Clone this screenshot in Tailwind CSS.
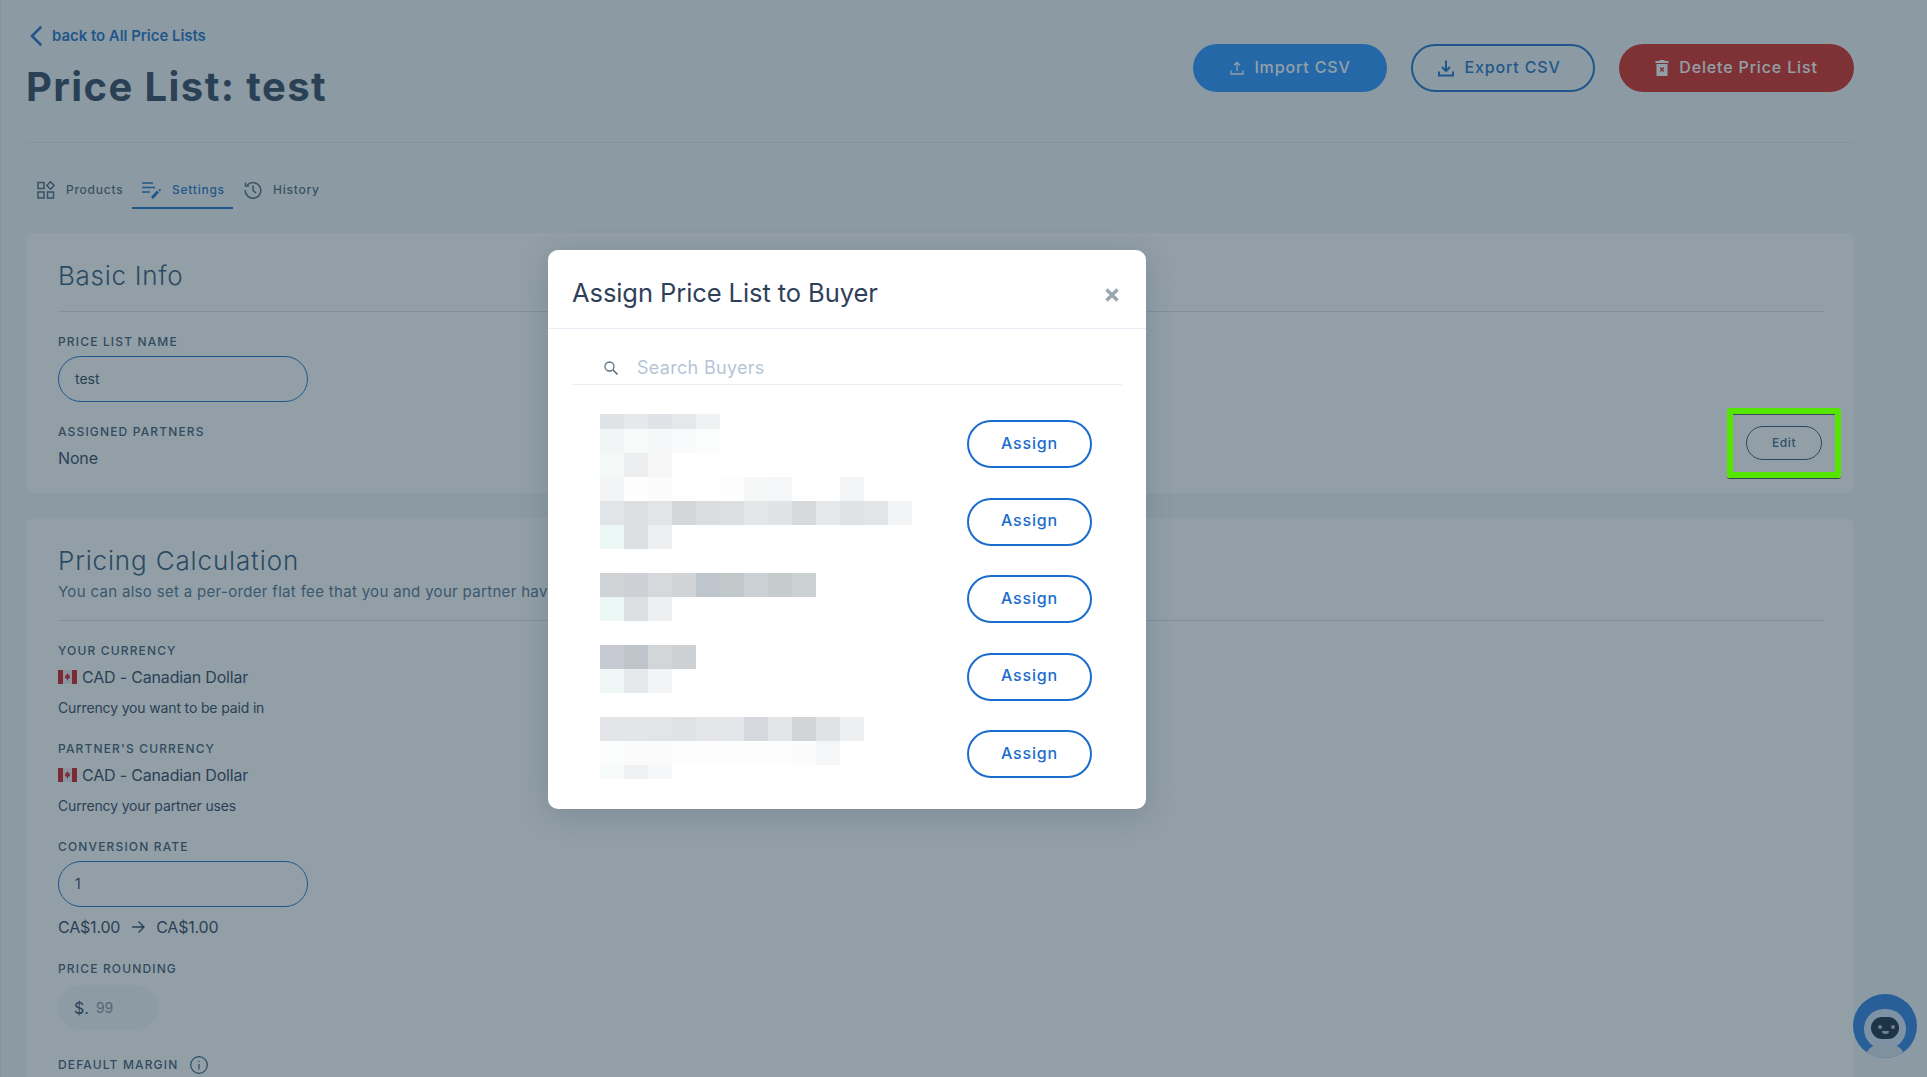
<!DOCTYPE html>
<html>
  <head>
    <meta charset="UTF-8" />
    <title>Price List: test</title>
    <script src="https://cdn.jsdelivr.net/npm/@tailwindcss/browser@4"></script>
  </head>
  <body class="font-['Inter',sans-serif] text-[#2f4159]">
    <div class="relative h-[1077px] overflow-hidden bg-[#f3f7f7] pl-[26px] pr-[73px]">
      <div class="absolute inset-y-0 left-0 w-px bg-[#dde6ee]"></div>

      <!-- Header -->
      <header class="flex justify-between h-[143px] pt-[26px] border-b border-[#dfe7f0]">
        <div>
          <a class="flex items-center gap-[10px] h-5 text-[#1a6dc4] text-[15px] font-semibold tracking-[-0.05px]">
            <svg class="ml-[4px] w-3 h-5" viewBox="0 0 12 20" fill="none" stroke="currentColor" stroke-width="2.6" stroke-linecap="round" stroke-linejoin="round"><path d="M10.5 1.5 2 10l8.5 8.5" /></svg>
            back to All Price Lists
          </a>
          <h1 class="mt-[17px] text-[40px] leading-[48px] font-bold tracking-[1.4px] text-[#2f4159]">Price List: test</h1>
        </div>
        <div class="flex gap-6 mt-[18px] h-12 text-base font-medium tracking-[0.85px]">
          <button class="flex items-center justify-center gap-[9px] w-[194px] pb-[3px] rounded-full bg-[#2591ff] text-white">
            <svg class="w-[16px] h-[16px] mt-[3px]" viewBox="0 0 16 16" fill="none" stroke="currentColor" stroke-width="1.3"><path d="M8 11V2.5M5.2 5.2 8 2.4l2.8 2.8M2 10.5v3.5h12v-3.5" /></svg>
            Import CSV
          </button>
          <button class="flex items-center justify-center gap-[9px] w-[184px] pb-[3px] pr-2 rounded-full border-2 border-[#1a6dc4] text-[#1a6dc4]">
            <svg class="w-[18px] h-[18px] mt-[3px]" viewBox="0 0 18 18" fill="none" stroke="currentColor" stroke-width="2"><path d="M9 1.5v10M5 8l4 4 4-4M2 12.5V16.500h14v-4" /></svg>
            Export CSV
          </button>
          <button class="flex items-center justify-center gap-[10px] w-[235px] pb-[3px] rounded-full bg-[#d9251b] text-white">
            <svg class="w-[14px] h-[16px] mt-[3px]" viewBox="0 0 14 16"><path fill="currentColor" d="M5 0h4l1 1h3.500v2H.5V1H4zM1.500 4h11v12h-11z" /><path stroke="#d9251b" stroke-width="1.300" d="M5.200 7.500l3.600 4M8.800 7.500l-3.600 4" /></svg>
            Delete Price List
          </button>
        </div>
      </header>

      <!-- Tabs -->
      <nav class="flex mt-[32px] h-[34px] text-xs font-medium tracking-[0.75px]">
        <a class="flex items-center gap-[11px] w-[106px] pl-[11px] pb-[5px] text-[#4c6377]">
          <svg class="w-[18px] h-[18px]" viewBox="0 0 18 18" fill="none" stroke="currentColor" stroke-width="1.500"><rect x="1" y="1.500" width="6" height="6" /><path d="M13.500.800 17.200 4.500 13.500 8.200 9.800 4.500z" /><rect x="1" y="11" width="6" height="6" /><rect x="10.500" y="11" width="6" height="6" /></svg>
          Products
        </a>
        <a class="flex items-center gap-[11px] w-[101px] pl-[10px] pb-[2px] border-b-2 border-[#1a6dc4] text-[#1a6dc4]">
          <svg class="w-[19px] h-[18px]" viewBox="0 0 19 18" fill="none" stroke="currentColor"><path stroke-width="1.600" d="M0 2h11M0 6.500h13M0 11h8" /><path stroke-width="2.800" d="M10 17l6-6.500" /><path stroke-width="1.800" d="M17 8.500l1.500 1.200" /></svg>
          Settings
        </a>
        <a class="flex items-center gap-[11px] ml-[11px] pb-[5px] text-[#4c6377]">
          <svg class="w-[18px] h-[18px]" viewBox="0 0 18 18" fill="none" stroke="currentColor" stroke-width="1.500"><path d="M3.200 4.200A7.800 7.800 0 1 1 1.200 9" /><path d="M1.500 1.500v3.500h3.500M9 4.500V9.500l3 2.500" /></svg>
          History
        </a>
      </nav>

      <!-- Basic Info -->
      <section class="mt-6 h-[261px] rounded-lg bg-white pl-[32px] pr-[30px] shadow-[0_1px_3px_rgba(40,60,80,0.05)]">
        <div class="h-[79px] pt-[27px] border-b border-[#d9e1e9]">
          <h2 class="text-[26px] leading-8 font-light text-[#2f5475] tracking-[0.7px]">Basic Info</h2>
        </div>
        <label class="block mt-[22px] text-xs leading-4 font-medium tracking-[1.15px] text-[#40566b]">PRICE LIST NAME</label>
        <div class="flex items-center mt-[6px] w-[250px] h-[46px] rounded-full border border-[#1a6dc4] pl-4 text-sm">test</div>
        <div class="flex justify-between mt-[22px]">
          <div>
            <label class="block text-xs leading-4 font-medium tracking-[1.15px] text-[#40566b]">ASSIGNED PARTNERS</label>
            <p class="mt-[6px] leading-6 tracking-[-0.15px]">None</p>
          </div>
          <div class="relative mt-[2px] mr-[2px] h-[34px]">
            <button class="flex items-center justify-center w-[76px] h-[34px] rounded-full border border-[#2f5475] text-xs font-medium tracking-[0.6px] text-[#3a6285]">Edit</button>
          </div>
        </div>
      </section>

      <!-- Pricing Calculation -->
      <section class="mt-6 h-[700px] rounded-lg bg-white pl-[32px] pr-[30px] shadow-[0_1px_3px_rgba(40,60,80,0.05)]">
        <div class="h-[103px] pt-[27px] border-b border-[#d9e1e9]">
          <h2 class="text-[26px] leading-8 font-light text-[#2f5475] tracking-[0.85px]">Pricing Calculation</h2>
          <p class="mt-[4px] text-[15px] leading-[22px] text-[#527089] tracking-[0.32px]">You can also set a per-order flat fee that you and your partner have agreed on</p>
        </div>
        <label class="block mt-[22px] text-xs leading-4 font-medium tracking-[1.15px] text-[#40566b]">YOUR CURRENCY</label>
        <div class="flex items-center gap-[5px] mt-[6px] h-6">
          <svg class="w-[19px] h-[14px]" viewBox="0 0 19 14"><rect width="19" height="14" fill="#e8ecef" /><rect width="5" height="14" fill="#d5141f" /><rect x="14" width="5" height="14" fill="#d5141f" /><path fill="#d5141f" d="M9.500 3l1 2 1.200-.3-.4 2.300 1-.2-.5 1.500-1.800.5v1.700h-1V8.800L7.200 8.300 6.700 6.800l1 .2-.4-2.300 1.200.3z" /></svg>
          <span class="tracking-[-0.18px]">CAD - Canadian Dollar</span>
        </div>
        <p class="mt-[9px] text-sm leading-5 tracking-[-0.15px]">Currency you want to be paid in</p>
        <label class="block mt-[23px] text-xs leading-4 font-medium tracking-[1.15px] text-[#40566b]">PARTNER'S CURRENCY</label>
        <div class="flex items-center gap-[5px] mt-[6px] h-6">
          <svg class="w-[19px] h-[14px]" viewBox="0 0 19 14"><rect width="19" height="14" fill="#e8ecef" /><rect width="5" height="14" fill="#d5141f" /><rect x="14" width="5" height="14" fill="#d5141f" /><path fill="#d5141f" d="M9.500 3l1 2 1.200-.3-.4 2.300 1-.2-.5 1.500-1.800.5v1.700h-1V8.800L7.200 8.300 6.700 6.800l1 .2-.4-2.300 1.200.3z" /></svg>
          <span class="tracking-[-0.18px]">CAD - Canadian Dollar</span>
        </div>
        <p class="mt-[9px] text-sm leading-5 tracking-[-0.15px]">Currency your partner uses</p>
        <label class="block mt-[23px] text-xs leading-4 font-medium tracking-[1.15px] text-[#40566b]">CONVERSION RATE</label>
        <div class="flex items-center mt-[6px] w-[250px] h-[46px] rounded-full border border-[#1a6dc4] pl-4 text-sm">1</div>
        <div class="flex items-center mt-[8px] h-6 tracking-[-0.2px]">
          <span>CA$1.00</span>
          <svg class="mx-[11px] w-[14px] h-[14px]" viewBox="0 0 14 14" fill="none" stroke="currentColor" stroke-width="1.300"><path d="M1 7h12M7.500 1.500 13 7l-5.500 5.500" /></svg>
          <span>CA$1.00</span>
        </div>
        <label class="block mt-[22px] text-xs leading-4 font-medium tracking-[1.15px] text-[#40566b]">PRICE ROUNDING</label>
        <div class="flex items-center gap-[7px] mt-[8px] w-[100px] h-[45px] rounded-full bg-[#f5f7f8] pl-4">
          <span>$.</span>
          <span class="text-sm text-[#7d8f9d]">99</span>
        </div>
        <div class="flex items-center gap-3 mt-[27px] h-4">
          <label class="text-xs leading-4 font-medium tracking-[1.15px] text-[#40566b]">DEFAULT MARGIN</label>
          <svg class="w-[18px] h-[18px]" viewBox="0 0 18 18" fill="none" stroke="#2f5475"><circle cx="9" cy="9" r="8.300" stroke-width="1.200" /><path stroke-width="1.200" d="M9 8v5.500M9 4.800v1.200" /></svg>
        </div>
      </section>

      <!-- Chat bot -->
      <div class="absolute left-[1853px] top-[994px] w-16 h-16 rounded-full overflow-hidden bg-[#2b7fe0]">
        <div class="absolute left-[11px] top-[15px] w-[42px] h-[40px] rounded-[20px] bg-white/80"></div>
        <div class="absolute left-[18px] top-[23px] w-[28px] h-[22px] rounded-[11px] bg-[#12283a]"></div>
        <div class="absolute left-[25px] top-[31px] w-[4px] h-[4px] rounded-full bg-white/70"></div>
        <div class="absolute left-[38px] top-[31px] w-[4px] h-[4px] rounded-full bg-white/70"></div>
        <div class="absolute left-[29px] top-[37px] w-[7px] h-[3px] rounded-b-full bg-white/70"></div>
        <div class="absolute left-[13px] top-[51px] w-[38px] h-[24px] rounded-full bg-[#d9e2e8]"></div>
      </div>

      <!-- Dim layer -->
      <div class="absolute inset-0 bg-[#253f4f]/50"></div>

      <!-- Highlight round the Edit button -->
      <div class="absolute left-[1727px] top-[408px] w-[114px] h-[71px] rounded-[3px] border-b border-[#33424f]">
        <div class="h-[70px] border-[6px] border-[#55e600] rounded-[3px]">
          <div class="h-px bg-[#3c4a55]"></div>
        </div>
      </div>

      <!-- Modal -->
      <div class="absolute left-[548px] top-[250px] w-[598px] h-[559px] rounded-[10px] bg-white shadow-[0_6px_30px_rgba(30,50,65,0.18)]">
        <div class="flex items-center justify-between h-[79px] pl-6 pr-[27px] pt-[9px] border-b border-[#e6eef7]">
          <h3 class="text-[25.500px] font-normal text-[#2f4159] tracking-[-0.08px]">Assign Price List to Buyer</h3>
          <svg class="w-[14px] h-[14px] mt-[3px]" viewBox="0 0 14 14" stroke="#9aa6ae" stroke-width="3.400"><path d="M1.500 1.500l11 11M12.500 1.500l-11 11" /></svg>
        </div>
        <div class="flex items-center gap-[19px] mx-6 h-[56px] pl-[32px] pt-[22px] border-b border-[#e9eff6]">
          <svg class="w-[14px] h-[14px]" viewBox="0 0 14 14" fill="none" stroke="#5d7282" stroke-width="1.300"><circle cx="5.500" cy="5.500" r="4.500" /><path stroke-width="1.600" d="M8.800 8.800l4.700 4.700" /></svg>
          <span class="text-[18px] text-[#b6c5d6] tracking-[0.3px]">Search Buyers</span>
        </div>
        <div class="flex justify-between pl-[52px] pr-[54px] pt-[29px]">
          <div id="mosaic"></div>
          <div class="flex flex-col gap-[29.500px] pt-[6px]">
            <button class="w-[125px] h-12 pb-[3px] rounded-full border-2 border-[#1a6dcc] text-base font-medium text-[#1a6dcc] tracking-[0.85px]">Assign</button>
            <button class="w-[125px] h-12 pb-[3px] rounded-full border-2 border-[#1a6dcc] text-base font-medium text-[#1a6dcc] tracking-[0.85px]">Assign</button>
            <button class="w-[125px] h-12 pb-[3px] rounded-full border-2 border-[#1a6dcc] text-base font-medium text-[#1a6dcc] tracking-[0.85px]">Assign</button>
            <button class="w-[125px] h-12 pb-[3px] rounded-full border-2 border-[#1a6dcc] text-base font-medium text-[#1a6dcc] tracking-[0.85px]">Assign</button>
            <button class="w-[125px] h-12 pb-[3px] rounded-full border-2 border-[#1a6dcc] text-base font-medium text-[#1a6dcc] tracking-[0.85px]">Assign</button>
          </div>
        </div>
      </div>
    </div>

    <script>
      // Blurred buyer names: [row height, cell colours]
      const rows = [
        [15, ["e0e3e6", "e6e9ec", "dfe2e6", "e5e8eb", "f0f1f3"]],
        [24, ["f2f5f5", "f8f9f9", "f6f7f8", "f9fafb", "fbfcfc"]],
        [24, ["f5faf9", "ecedef", "f6f6f7"]],
        [24, ["f3f4f5", "fdfdfd", "fbfbfc", "ffffff", "ffffff", "fdfdfd", "f6f7f7", "f5f6f7", "ffffff", "ffffff", "f4f5f6"]],
        [24, ["e2e5e8", "dcdfe2", "e2e5e7", "d3d7d9", "dbdee0", "dcdfe2", "e4e7ea", "dfe3e5", "d6dadc", "e6e9eb", "dfe2e5", "e2e5e7", "f3f4f5"]],
        [24, ["ebf7f4", "dcdfe2", "eeeff1"]],
        [24, []],
        [24, ["cfd3d6", "cdd1d5", "d5d9db", "d0d4d7", "c0c6cd", "c1c8ca", "cbd0d4", "c6cbce", "cbd0d3"]],
        [24, ["ebf7f4", "dcdfe2", "eeeff1"]],
        [24, []],
        [24, ["c6c9d1", "bfc4cb", "d2d6d8", "cdd1d4"]],
        [24, ["eff8f6", "e6e9ec", "f3f4f5"]],
        [24, []],
        [24, ["e3e5e8", "e3e6e8", "e2e5e7", "dfe2e4", "e4e6e9", "e4e7e9", "d5d9dd", "e3e6e8", "d1d5d8", "e0e3e5", "eeeff1"]],
        [24, ["fcfdfd", "fbfbfb", "fbfbfb", "fdfdfd", "fdfdfd", "fdfdfd", "fdfdfd", "fdfdfd", "fbfbfc", "f5f6f7"]],
        [14, ["f6fbfa", "f0f1f2", "f6f7f8"]],
      ];

      let html = "";
      for (const [height, cells] of rows) {
        html += `<div class="flex" style="height:${height}px">`;
        for (const color of cells) {
          html += `<div class="w-6" style="background:#${color}"></div>`;
        }
        html += `</div>`;
      }
      document.getElementById("mosaic").innerHTML = html;
    </script>
  </body>
</html>
